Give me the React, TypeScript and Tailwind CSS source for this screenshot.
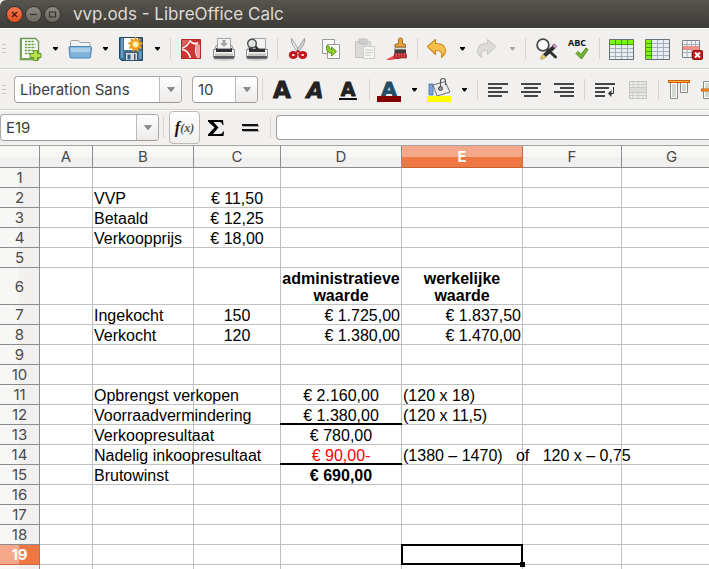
import type { ReactNode } from "react";

type Align = "left" | "center" | "right";
type Cell = { text: string; align?: Align; bold?: boolean; red?: boolean; rule?: boolean };

const columns = ["A", "B", "C", "D", "E", "F", "G"];
const selected = { column: "E", row: 19 };

const cells: Record<string, Cell> = {
  B2: { text: "VVP" },
  C2: { text: "€ 11,50", align: "center" },
  B3: { text: "Betaald" },
  C3: { text: "€ 12,25", align: "center" },
  B4: { text: "Verkoopprijs" },
  C4: { text: "€ 18,00", align: "center" },
  D6: { text: "administratieve\nwaarde", align: "center", bold: true },
  E6: { text: "werkelijke\nwaarde", align: "center", bold: true },
  B7: { text: "Ingekocht" },
  C7: { text: "150", align: "center" },
  D7: { text: "€ 1.725,00", align: "right" },
  E7: { text: "€ 1.837,50", align: "right" },
  B8: { text: "Verkocht" },
  C8: { text: "120", align: "center" },
  D8: { text: "€ 1.380,00", align: "right" },
  E8: { text: "€ 1.470,00", align: "right" },
  B11: { text: "Opbrengst verkopen" },
  D11: { text: "€ 2.160,00", align: "center" },
  E11: { text: "(120 x 18)" },
  B12: { text: "Voorraadvermindering" },
  D12: { text: "€ 1.380,00", align: "center", rule: true },
  E12: { text: "(120 x 11,5)" },
  B13: { text: "Verkoopresultaat" },
  D13: { text: "€ 780,00", align: "center" },
  B14: { text: "Nadelig inkoopresultaat" },
  D14: { text: "€ 90,00-", align: "center", red: true, rule: true },
  E14: { text: "(1380 – 1470)   of   120 x – 0,75" },
  B15: { text: "Brutowinst" },
  D15: { text: "€ 690,00", align: "center", bold: true },
};

const alignClass: Record<Align, string> = {
  left: "text-left",
  center: "text-center",
  right: "text-right",
};

function Tool({ label, wide, children }: { label: string; wide?: boolean; children: ReactNode }) {
  return (
    <button type="button" aria-label={label} className={`flex h-8 flex-none items-center justify-center ${wide ? "w-9" : "w-[33px]"}`}>
      {children}
    </button>
  );
}

function Icon({ children, w = 25 }: { children: ReactNode; w?: number }) {
  return (
    <svg width={w} height="24" viewBox={`0 0 ${w} 24`} aria-hidden="true" className="flex-none overflow-visible">
      {children}
    </svg>
  );
}

function Caret({ label, dim }: { label: string; dim?: boolean }) {
  return (
    <button type="button" aria-label={label} className="flex h-8 w-[17px] flex-none items-center justify-center">
      <svg width="7" height="4" viewBox="0 0 7 4" aria-hidden="true">
        <path d="M1 0h5v1L4 3.5H3L1 1z" fill={dim ? "#a9a8a7" : "#000"} />
      </svg>
    </button>
  );
}

function Sep() {
  return (
    <div className="flex h-6 w-2 flex-none justify-center">
      <div className="h-[21px] w-px self-center bg-[#d6d4d2]" />
    </div>
  );
}

function Handle() {
  return (
    <div className="flex w-[14px] flex-none flex-col gap-[3px] pl-[2px]">
      <div className="h-px w-1 bg-[#c9c7c5]" />
      <div className="h-px w-1 bg-[#c9c7c5]" />
      <div className="h-px w-1 bg-[#c9c7c5]" />
    </div>
  );
}

function ComboArrow() {
  return (
    <svg width="8" height="5" viewBox="0 0 8 5" aria-hidden="true">
      <path d="M0.5 0.5h7L4 4.8z" fill="#8b8b8b" stroke="#6f6f6f" strokeWidth="0.6" />
    </svg>
  );
}

const comboBox = "relative flex h-[27px] flex-none overflow-hidden rounded border border-[#aba8a5] border-b-[#9b9895] bg-white";
const comboEnd = "flex h-full w-[22px] flex-none items-center justify-center border-l border-[#bdbab7] bg-linear-to-b from-[#fefefe] to-[#ecebea]";
const comboText = "min-w-0 flex-1 bg-transparent pl-[5px] text-[15px] leading-6 text-[#3c3c3c] outline-none";

function Combo({ label, value, className }: { label: string; value: string; className: string }) {
  return (
    <div className={`${comboBox} ${className}`}>
      <select aria-label={label} defaultValue={value} className={`${comboText} appearance-none`}>
        <option>{value}</option>
      </select>
      <span className={comboEnd}>
        <ComboArrow />
      </span>
    </div>
  );
}

function TitleBar() {
  const ring = "flex size-[17px] flex-none items-center justify-center rounded-full border";
  return (
    <header className="flex h-7 items-center gap-[2px] rounded-tl-md bg-linear-to-b from-[#57554e] to-[#3d3c38] pl-[6px]">
      <button type="button" aria-label="Close" className={`${ring} border-[#33312d] bg-linear-to-b from-[#f4784f] to-[#e2501f]`}>
        <svg width="9" height="9" viewBox="0 0 9 9" aria-hidden="true">
          <path d="M2 2l5 5M7 2L2 7" stroke="#4a1c0c" strokeWidth="1.4" />
        </svg>
      </button>
      <button type="button" aria-label="Minimize" className={`${ring} border-[#33312d] bg-linear-to-b from-[#8d8a83] to-[#6a6862]`}>
        <svg width="9" height="9" viewBox="0 0 9 9" aria-hidden="true">
          <path d="M1 4.5h7" stroke="#35342f" strokeWidth="1.2" />
        </svg>
      </button>
      <button type="button" aria-label="Maximize" className={`${ring} border-[#33312d] bg-linear-to-b from-[#8d8a83] to-[#6a6862]`}>
        <svg width="9" height="9" viewBox="0 0 9 9" aria-hidden="true">
          <path d="M1.5 2h6v5h-6z" fill="none" stroke="#35342f" strokeWidth="1.2" />
        </svg>
      </button>
      <h1 className="pl-[10px] text-[17px] leading-7 whitespace-nowrap text-[#dfdbd2]">vvp.ods - LibreOffice Calc</h1>
    </header>
  );
}

function PrinterBody() {
  return (
    <>
      <ellipse cx="13" cy="22.5" rx="10.5" ry="1.2" fill="#000" opacity=".15" />
      <path d="M5 8.5h16l2.5 8H2.5z" fill="#d9d9d8" stroke="#8c8c8a" strokeWidth=".8" />
      <path d="M2.5 12.5h21v7.5q0 1.5-1.5 1.5H4q-1.500 0-1.500-1.500z" fill="#f1f1f0" stroke="#777" strokeWidth=".8" />
      <path d="M5 11h16v4H5z" fill="#2e3234" />
      <path d="M4 16.500h18v2.500H4z" fill="#c6c6c5" />
      <path d="M3 19h20v1.500q0 1-1 1H4q-1 0-1-1z" fill="#55575a" />
    </>
  );
}

function StandardToolbar() {
  return (
    <div role="toolbar" aria-label="Standard" className="flex h-[41px] items-center overflow-hidden border-t border-b border-t-[#fbfbfa] border-b-[#d4d2d0]">
      <Handle />
      <Tool label="New">
        <Icon>
          <path d="M2.500 1.500h15l3 3v18h-18z" fill="#fff" stroke="#6b9a4f" strokeWidth="1.400" />
          <path d="M2 1h2v22H2zM2 21h14v2H2z" fill="#74a355" />
          <path d="M7 4.500h9M7 7.500h10.500M7 10.500h10.500M7 13.500h8M7 16.500h5" stroke="#5d9a3e" strokeWidth="1.600" strokeDasharray="2.400 .8" />
          <path d="M15.500 13.500h4v3h3.500v4h-3.500v3h-4v-3h-3.500v-4h3.500z" fill="#b4e04a" stroke="#5f9321" strokeWidth="1" />
        </Icon>
      </Tool>
      <Caret label="New options" />
      <Tool label="Open">
        <Icon>
          <path d="M2.500 4.500q0-1 1-1h6.500q1 0 1.500 1l.5 1H21q1 0 1 1V12h-19.500z" fill="#f3f3f3" stroke="#a3a3a3" />
          <path d="M2 9.500h20.500q1 0 1 1l-1 9.500q0 1-1 1H3q-1 0-1-1L1 10.500q0-1 1-1z" fill="#7fb3da" stroke="#4d83ae" />
          <path d="M2.500 10.800h19.500l-.4 4.500H3z" fill="#a9cfe9" />
        </Icon>
      </Tool>
      <Caret label="Open options" />
      <div className="w-px flex-none" />
      <Tool label="Save">
        <Icon>
          <path d="M.5 .5h23v23h-21l-2-2z" fill="#3d7196" stroke="#1f4360" />
          <path d="M2 1h2v20H2zM20 14h2.500v8H20z" fill="#6d9dbe" />
          <path d="M5 1h14v12H5z" fill="#fff" />
          <path d="M6.500 15.500h12v8h-12z" fill="#dcdcdc" stroke="#1f4360" strokeWidth=".8" />
          <path d="M8.500 17.500h3v5h-3zM15 17h1.500v6H15z" fill="#345d7c" />
          <path d="M16.500 0l1.400 3.200 3.300-1.500-.8 3.400 3.500 1.200-3 2 2 2.900-3.500-.1-.5 3.500-2.400-2.500-2.400 2.500-.5-3.500-3.500.1 2-2.900-3-2 3.500-1.200-.8-3.400 3.300 1.500z" fill="#ef9a18" stroke="#ef9a18" strokeWidth=".8" />
          <circle cx="16.500" cy="7.300" r="3.200" fill="#fff3b8" stroke="#f8b93c" strokeWidth="1.200" />
        </Icon>
      </Tool>
      <div className="w-px flex-none" />
      <Caret label="Save options" />
      <Sep />
      <Tool label="Export as PDF">
        <Icon>
          <path d="M3.500 2.500h19v19h-19z" fill="#cf3535" stroke="#b02828" />
          <path d="M4 3h6.500C9 6 6.500 8.500 4 10z" fill="#d9605f" />
          <path d="M4.200 11.200Q10 9 12 3.500M4.200 12.500Q10 13 12.500 21M12 3.500Q14 7.500 19 6.500q-3 7 1 14.500M12 3.500q2 4 8 2.500" fill="none" stroke="#fff" strokeWidth="1.500" />
          <path d="M17.500 7.500H22V21h-2.500Q17 14 17.500 7.500z" fill="#e9a09d" />
        </Icon>
      </Tool>
      <Tool label="Print">
        <Icon>
          <PrinterBody />
          <path d="M6.500 1.500h13v10h-13z" fill="#f4f4f4" stroke="#a5a5a5" />
          <path d="M11.500 3h3v3h2.500l-4 4-4-4h2.500z" fill="#a2a5a7" />
        </Icon>
      </Tool>
      <Tool label="Print preview">
        <Icon>
          <PrinterBody />
          <path d="M8.500 1.500h13v10h-13z" fill="#f4f4f4" stroke="#a5a5a5" />
          <path d="M11 9l5 5.500" stroke="#333" strokeWidth="2.400" />
          <circle cx="8" cy="6.500" r="4.300" fill="#dfe3e4" fillOpacity=".9" stroke="#4b4b4b" strokeWidth="1.400" />
        </Icon>
      </Tool>
      <Sep />
      <Tool label="Cut">
        <Icon>
          <path d="M6.500 1.500q-1 3 1.500 7l4.500 6.500 1.500-2z" fill="#e9e9e8" stroke="#8a8a8a" strokeWidth=".8" />
          <path d="M19.500 1.500q1 3-1.500 7l-4.500 6.500-1.500-2z" fill="#d4d5d4" stroke="#8a8a8a" strokeWidth=".8" />
          <ellipse cx="8.300" cy="18" rx="3" ry="2.600" fill="none" stroke="#c3151c" strokeWidth="3" />
          <ellipse cx="17.700" cy="18" rx="3" ry="2.600" fill="none" stroke="#c3151c" strokeWidth="3" />
          <path d="M11.500 15.500L13 14l1.500 1.500" fill="none" stroke="#c3151c" strokeWidth="1.600" />
        </Icon>
      </Tool>
      <Tool label="Copy">
        <Icon>
          <path d="M4.500 2.500h12v14h-12z" fill="#fafafa" stroke="#9a9b98" />
          <path d="M9.500 7.500h12v14h-12z" fill="#fafafa" stroke="#9a9b98" />
          <path d="M8.500 9q-1 7 5 7v3l5-4.500-5-4.500v2.500q-3 0-2.500-3.500z" fill="#8ed02a" stroke="#4e8f11" strokeWidth=".9" />
        </Icon>
      </Tool>
      <Tool label="Paste">
        <Icon>
          <path d="M4.500 4.500h15v16h-15z" fill="#dcdbda" stroke="#c8c7c6" />
          <path d="M8 2h8v5H8z" fill="#cfcecd" stroke="#bfbebd" />
          <path d="M12.500 9.500h11v12h-11z" fill="#f4f4f3" stroke="#cfcecd" />
          <path d="M14.500 13h7M14.500 15.500h7M14.500 18h5" stroke="#cbcac9" />
        </Icon>
      </Tool>
      <Tool label="Clone formatting">
        <Icon>
          <path d="M2 22.500q5-2.500 8-4l2 3.500q-5 1.500-10 .5z" fill="#f0484c" />
          <path d="M10.500 15.500h11.500q1.500 3 .5 6-4-.5-6 0-3 1-6 0-1.500-2 0-6z" fill="#a8262c" />
          <path d="M12.500 16l-.5 4.500M15 16v4.500M17.500 16l.5 4.500M20 16l.5 4" stroke="#e5686c" strokeWidth=".9" />
          <path d="M10.500 10.500h11.500v5.500H10.500z" fill="#3c3c3c" />
          <path d="M10.500 11.500h11.500" stroke="#dcdcdc" strokeWidth="1.800" />
          <path d="M14.500 2.500q0-1.500 2-1.500t2 1.500v4l3 1v2.500H11V7.500l3.500-1z" fill="#e3a246" stroke="#9a5d14" strokeWidth=".9" />
        </Icon>
      </Tool>
      <Sep />
      <Tool label="Undo">
        <Icon>
          <path d="M2.500 9.500l8-7v4q9.500-.5 10 7 0 4-4 7 2-7.500-6-7v4z" fill="#f7c04d" stroke="#d0891a" strokeWidth="1.100" strokeLinejoin="round" />
        </Icon>
      </Tool>
      <Caret label="Undo steps" />
      <Tool label="Redo">
        <Icon>
          <path d="M20.500 9.500l-8-7v4q-9.500-.5-10 7 0 4 4 7-2-7.500 6-7v4z" fill="#dddcdb" stroke="#cbcac9" strokeWidth="1.100" strokeLinejoin="round" />
        </Icon>
      </Tool>
      <Caret label="Redo steps" dim />
      <Sep />
      <Tool label="Find and replace">
        <Icon>
          <path d="M14.500 12.500l8 7.500" stroke="#333" strokeWidth="3" strokeLinecap="round" />
          <circle cx="10" cy="8" r="5.900" fill="#fafafa" stroke="#4a4a4a" strokeWidth="1.800" />
          <path d="M21 10L11.500 18.500" stroke="#2d2f30" strokeWidth="4" />
          <path d="M10 17l3 3-4.500 2.500-1-1z" fill="#ecd45a" stroke="#77691f" strokeWidth=".6" />
          <path d="M19.300 8.300l2-1.500 2.500 2.600-1.800 1.900z" fill="#dc9ad6" stroke="#7d4a7a" strokeWidth=".7" />
        </Icon>
      </Tool>
      <Tool label="Spelling">
        <Icon>
          <text x="2" y="9" fontSize="9" fontWeight="700" fill="#111" fontFamily="'Open Sans', 'Noto Sans', sans-serif">ABC</text>
          <path d="M10 16.500l2-2 3 3 5-6.500 2 1.500-6.500 9.500z" fill="#76b82e" stroke="#417d12" strokeWidth=".9" strokeLinejoin="round" />
        </Icon>
      </Tool>
      <Sep />
      <Tool label="Insert row above" wide>
        <Icon w={26}>
          <path d="M1.500 2.500h24v20h-24z" fill="#fff" stroke="#687078" />
          <path d="M2 7h23v15H2z" fill="#e9edf2" />
          <path d="M2 3h23v4H2z" fill="#7df510" />
          <path d="M2 7.500h23M7.500 3v4M13.500 3v4M19.500 3v4" stroke="#3c9d0c" />
          <path d="M7.500 8v14M13.500 8v14M19.500 8v14M2 11.500h23M2 15.500h23M2 19.500h23" stroke="#a4adb8" />
        </Icon>
      </Tool>
      <Tool label="Insert column before" wide>
        <Icon w={26}>
          <path d="M1.500 2.500h24v20h-24z" fill="#f4f6f9" stroke="#687078" />
          <path d="M8 3h17v19H8z" fill="#e9edf2" />
          <path d="M13.500 3v19M19.500 3v19M8 6.500h17M8 10.500h17M8 14.500h17M8 18.500h17" stroke="#a4adb8" />
          <path d="M2 3h5v19H2z" fill="#7df510" />
          <path d="M7.500 3v19M2 6.500h5M2 10.500h5M2 14.500h5M2 18.500h5" stroke="#3c9d0c" />
        </Icon>
      </Tool>
      <Tool label="Delete row">
        <Icon>
          <path d="M3.500 3.500h17v17h-17z" fill="#f1f3f6" stroke="#7b838b" />
          <path d="M8 4v16M12.500 4v16M16.500 4v16M4 7.500h16M4 15.500h16" stroke="#a4adb8" />
          <path d="M4 9h16v4H4z" fill="#ef8f86" />
          <rect x="13.500" y="13.500" width="10" height="9" rx="1" fill="#c5171c" stroke="#8f0e12" />
          <path d="M16 15.500l5 5M21 15.500l-5 5" stroke="#fff" strokeWidth="1.800" />
        </Icon>
      </Tool>
    </div>
  );
}

function LetterA({ size, y, fill = "#222", slant }: { size: number; y: number; fill?: string; slant?: boolean }) {
  return (
    <text
      x="12"
      y={y}
      textAnchor="middle"
      fontSize={size}
      fontWeight="700"
      fontStyle={slant ? "italic" : "normal"}
      fill={fill}
      stroke={fill}
      strokeWidth=".9"
      strokeLinejoin="round"
      fontFamily="'DejaVu Sans', sans-serif"
    >
      A
    </text>
  );
}

function Lines({ rows }: { rows: [number, number][] }) {
  return (
    <>
      {rows.map(([x, w], i) => (
        <rect key={i} x={x} y={5 + i * 4} width={w} height="2" fill="#454545" />
      ))}
    </>
  );
}

function FormattingToolbar() {
  return (
    <div role="toolbar" aria-label="Formatting" className="flex h-[41px] items-center overflow-hidden border-t border-b border-t-[#fbfbfa] border-b-[#d4d2d0]">
      <Handle />
      <Combo label="Font name" value="Liberation Sans" className="mr-[10px] w-[168px]" />
      <Combo label="Font size" value="10" className="w-[66px]" />
      <Sep />
      <Tool label="Bold">
        <Icon><LetterA size={23} y={20} /></Icon>
      </Tool>
      <Tool label="Italic">
        <Icon><LetterA size={22} y={20} slant /></Icon>
      </Tool>
      <Tool label="Underline">
        <Icon>
          <LetterA size={19} y={18} />
          <path d="M3 20h18v2H3z" fill="#111" />
        </Icon>
      </Tool>
      <Sep />
      <Tool label="Font color">
        <Icon>
          <LetterA size={20} y={18} fill="#1f4f69" />
          <path d="M0 18h24v6H0z" fill="#800000" />
        </Icon>
      </Tool>
      <Caret label="Font color options" />
      <Tool label="Background color">
        <Icon>
          <path d="M2 6h4v11H2z" fill="#7fa3d6" stroke="#3f69a8" strokeWidth=".8" />
          <path d="M6 7l12-3.500 5 10.500-13 4z" fill="#ececeb" stroke="#6d6d6d" />
          <path d="M13.500 9.500V3q0-2.500 2.500-2.500T18.500 3v4" fill="none" stroke="#555" strokeWidth="1.100" />
          <circle cx="13.500" cy="10.500" r="2" fill="#9a9a9a" stroke="#444" />
          <path d="M0 18h24v6H0z" fill="#ffff00" />
        </Icon>
      </Tool>
      <Caret label="Background color options" />
      <Sep />
      <Tool label="Align left">
        <Icon><Lines rows={[[3, 20], [3, 14], [3, 20], [3, 14]]} /></Icon>
      </Tool>
      <Tool label="Align center">
        <Icon><Lines rows={[[3, 20], [6, 14], [3, 20], [6, 14]]} /></Icon>
      </Tool>
      <Tool label="Align right">
        <Icon><Lines rows={[[3, 20], [9, 14], [3, 20], [9, 14]]} /></Icon>
      </Tool>
      <Sep />
      <Tool label="Wrap text">
        <Icon>
          <Lines rows={[[3, 20], [3, 14], [3, 10], [3, 10]]} />
          <path d="M21.500 9v6.500H18" fill="none" stroke="#333" />
          <path d="M16 15.500l3.500-3.500v7z" fill="#333" />
        </Icon>
      </Tool>
      <Tool label="Merge cells">
        <Icon>
          <path d="M4.500 3.500h17v17h-17z" fill="#ececeb" stroke="#c3c2c1" />
          <path d="M8 4v16M13 4v16M18 4v16M5 6.500h16M5 17.500h16" stroke="#cfcecd" />
          <path d="M4.500 9.500h17v5h-17z" fill="#dddcdb" stroke="#c8c7c6" />
        </Icon>
      </Tool>
      <Sep />
      <Tool label="Align top">
        <Icon>
          <path d="M4.500 4.500h7v16h-7zM14.500 4.500h7v10h-7z" fill="#fff" stroke="#868883" />
          <path d="M6 6h4v13H6zM16 6h4v7h-4z" fill="#d2d7cd" />
          <path d="M2 2h22v3H2z" fill="#ce5c00" />
          <path d="M3 3.500h20" stroke="#fcaf3e" />
        </Icon>
      </Tool>
      <Tool label="Center vertically">
        <Icon>
          <path d="M4.500 3.500h7v17h-7zM14.500 6.500h7v11h-7z" fill="#fff" stroke="#868883" />
          <path d="M6 5h4v14H6zM16 8h4v8h-4z" fill="#d2d7cd" />
          <path d="M2 10.500h22v3H2z" fill="#ce5c00" />
          <path d="M3 12h20" stroke="#fcaf3e" />
        </Icon>
      </Tool>
    </div>
  );
}

function FormulaBar() {
  return (
    <div className="flex h-[35px] items-center overflow-hidden border-t border-b border-t-[#fbfbfa] border-b-transparent">
      <div className={`${comboBox} w-[159px]`}>
        <input aria-label="Name box" defaultValue="E19" className={comboText} />
        <button type="button" aria-label="Open name list" className={comboEnd}>
          <ComboArrow />
        </button>
      </div>
      <Sep />
      <button type="button" aria-label="Function wizard" className="ml-[2px] flex h-[33px] w-[31px] flex-none items-center justify-center rounded border border-[#bcb9b6] bg-linear-to-b from-[#fefefe] to-[#f0efee] font-['Liberation_Serif',serif] text-[#111] italic">
        <span className="text-base leading-5 font-bold">f</span>
        <span className="text-xs leading-5 font-bold text-[#55513f]">(x)</span>
      </button>
      <Tool label="Sum">
        <Icon>
          <path d="M4 4h15l.5 5h-1q-.5-3-3-3H9.500l5 5.500-5.500 6.500h7q2.500 0 3-2.500H20L19.500 20H4v-1.500l6.500-7L4 5.500z" fill="#000" />
        </Icon>
      </Tool>
      <Tool label="Function">
        <Icon>
          <path d="M6 9h16v2H6zM6 14h16v2H6z" fill="#000" opacity=".3" />
          <path d="M5 8h16v2H5zM5 13h16v2H5z" fill="#111" />
        </Icon>
      </Tool>
      <Sep />
      <input aria-label="Formula input line" className="ml-[2px] h-[25px] min-w-0 flex-1 rounded-l border border-r-0 border-[#a09d9a] bg-white px-[5px] text-[15px] outline-none" />
    </div>
  );
}

const colHead = "h-[22px] border-r border-b p-0 text-[15px] leading-[21px]";
const plainCol = "border-[#8c8c8c] bg-linear-to-b from-[#f7f7f5] from-50% to-[#f1f0ee] to-50% font-normal text-[#4a4a4a]";
const activeCol = "border-[#d3683c] border-b-[#c9602f] bg-linear-to-b from-[#f6a88b] from-50% to-[#ef7743] to-50% font-bold text-white";
const rowHead = "border-r border-b p-0 text-center text-[15px] leading-[19px]";
const plainRow = "border-[#8c8c8c] bg-linear-to-r from-[#f7f7f5] from-50% to-[#f1f0ee] to-50% font-normal text-[#4a4a4a]";
const activeRow = "border-[#d3683c] bg-linear-to-r from-[#f6a88b] from-50% to-[#ef7743] to-50% font-bold text-white";

function Sheet() {
  const rows = Array.from({ length: 20 }, (_, i) => i + 1);
  return (
    <main className="overflow-hidden border-t border-[#a5a3a1]">
      <table className="w-[722px] min-w-full table-fixed border-separate border-spacing-0 bg-white">
        <colgroup>
          <col className="w-[40px]" />
          <col className="w-[53px]" />
          <col className="w-[101px]" />
          <col className="w-[87px]" />
          <col className="w-[121px]" />
          <col className="w-[121px]" />
          <col className="w-[99px]" />
          <col className="w-[100px]" />
        </colgroup>
        <thead>
          <tr>
            <td className={`${colHead} ${plainCol}`} />
            {columns.map((c) => (
              <th key={c} scope="col" className={`${colHead} ${c === selected.column ? activeCol : plainCol}`}>
                {c}
              </th>
            ))}
          </tr>
        </thead>
        <tbody>
          {rows.map((r) => (
            <tr key={r} className={r === 6 ? "h-[37px]" : "h-5"}>
              <th scope="row" className={`${rowHead} ${r === selected.row ? activeRow : plainRow}`}>
                {r}
              </th>
              {columns.map((c) => {
                const cell = cells[c + r];
                const active = c === selected.column && r === selected.row;
                return (
                  <td
                    key={c}
                    className={[
                      "relative border-r border-b border-[#c0c0c0] px-px pb-0 font-['Liberation_Sans',Arial,sans-serif] text-base whitespace-pre",
                      r === 6 ? "pt-px leading-[17px]" : "pt-[3px] leading-4",
                      cell?.bold ? "font-bold" : "font-normal",
                      cell?.red ? "text-[#f00]" : "text-black",
                      alignClass[cell?.align ?? "left"],
                    ].join(" ")}
                  >
                    {cell?.text}
                    {cell?.rule && <div className="absolute -right-px -bottom-px -left-px h-[2px] bg-black" />}
                    {active && (
                      <div className="absolute -inset-px z-10 border-2 border-black">
                        <div className="absolute -right-1 -bottom-1 size-[5px] bg-black" />
                      </div>
                    )}
                  </td>
                );
              })}
            </tr>
          ))}
        </tbody>
      </table>
    </main>
  );
}

export default function App() {
  return (
    <div className="h-screen overflow-hidden bg-[#f1f0ee] font-['Inter','Lato',sans-serif]">
      <TitleBar />
      <StandardToolbar />
      <FormattingToolbar />
      <FormulaBar />
      <Sheet />
    </div>
  );
}
